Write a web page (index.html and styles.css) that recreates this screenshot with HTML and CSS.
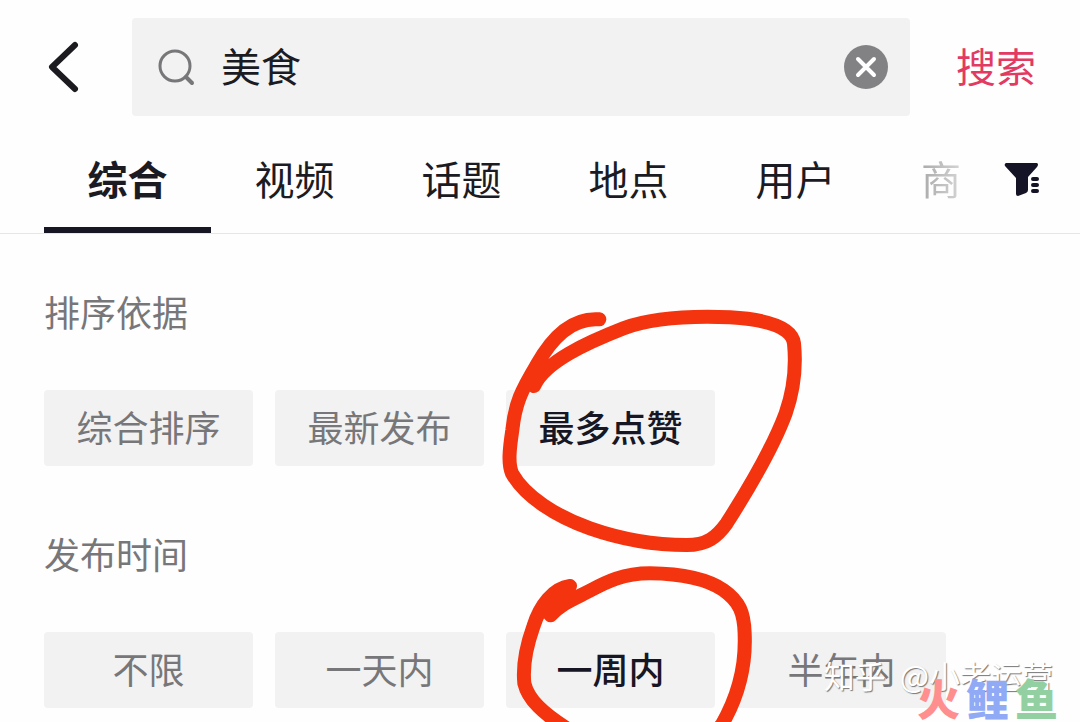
FILE: index.html
```html
<!DOCTYPE html>
<html lang="zh-CN">
<head>
  <meta charset="UTF-8" />
  <meta name="viewport" content="width=device-width, initial-scale=1.0"/>
  <title>美食 - 搜索</title>
  <link rel="stylesheet" href="styles.css">
</head>
<body>
  <div class="page">
    <form class="search-bar">
      <button type="button" class="back-btn" aria-label="返回">
        <svg width="36" height="54" viewBox="0 0 36 54">
          <path d="M31 5 L8 27 L31 49" fill="none" stroke="#1b1b20" stroke-width="6" stroke-linecap="round" stroke-linejoin="round"/>
        </svg>
      </button>
      <div class="search-box">
        <svg width="38" height="38" viewBox="0 0 38 38" aria-hidden="true">
          <circle cx="17" cy="18" r="15" fill="none" stroke="#77777a" stroke-width="3"/>
          <path d="M28 29 L34 35" stroke="#77777a" stroke-width="4" stroke-linecap="round"/>
        </svg>
        <input type="text" class="search-input" aria-label="搜索内容" value="美食">
        <button type="button" class="clear-btn" aria-label="清除">
          <svg width="44" height="44" viewBox="0 0 44 44">
            <circle cx="22" cy="22" r="22" fill="#828285"/>
            <path d="M14 14 L30 30 M30 14 L14 30" stroke="#fff" stroke-width="4" stroke-linecap="round"/>
          </svg>
        </button>
      </div>
      <button type="submit" class="submit-btn">搜索</button>
    </form>

    <div class="tab-bar">
      <nav class="tabs">
        <a href="#all" class="tab active">综合</a>
        <a href="#video" class="tab">视频</a>
        <a href="#topic" class="tab">话题</a>
        <a href="#place" class="tab">地点</a>
        <a href="#user" class="tab">用户</a>
        <a href="#goods" class="tab last">商</a>
      </nav>
      <button type="button" class="filter-btn" aria-label="筛选">
        <svg width="36" height="36" viewBox="0 0 36 36">
          <path d="M2 1 H33 Q35 2 33 5 L24 15 V28 Q24 30 22 31 L14 34 Q12 34 12 32 V16 L1 4 Q0 2 2 1 Z" fill="#151427"/>
          <path d="M29 17 H33 M29 23 H33 M29 29 H33" stroke="#151427" stroke-width="4" stroke-linecap="round"/>
        </svg>
      </button>
    </div>

    <main class="filters">
      <section class="filter-group">
        <h2>排序依据</h2>
        <div class="options">
          <button type="button" class="option">综合排序</button>
          <button type="button" class="option">最新发布</button>
          <div class="marked">
            <button type="button" class="option selected">最多点赞</button>
            <svg class="mark mark-likes" viewBox="0 0 990 780" aria-hidden="true">
              <path d="M328 58 C250 52 190 105 140 195 C95 270 75 310 67 390 C58 450 54 490 66 520 C105 590 200 650 300 685 C400 720 500 735 590 735 C650 735 680 712 710 670 C780 560 850 440 887 340 C915 260 917 180 912 130 C905 75 810 57 720 52 C600 47 490 52 400 85 C290 128 165 185 132 258 L140 195"/>
            </svg>
          </div>
        </div>
      </section>

      <section class="filter-group">
        <h2>发布时间</h2>
        <div class="options">
          <button type="button" class="option">不限</button>
          <button type="button" class="option">一天内</button>
          <div class="marked">
            <button type="button" class="option selected">一周内</button>
            <svg class="mark mark-week" viewBox="0 0 870 600" aria-hidden="true">
              <path d="M240 108 C190 115 150 165 130 230 C105 300 98 350 103 400 C115 450 160 490 230 535 C350 610 620 610 695 525 C750 430 768 340 764 250 C762 190 750 155 700 120 C640 80 560 71 480 70 C400 70 350 95 300 122 C250 148 215 160 182 196 L158 170 L225 122"/>
            </svg>
          </div>
          <button type="button" class="option">半年内</button>
        </div>
      </section>
    </main>

    <div class="credit">
      <span>知乎</span>
      <span>@小老运营</span>
    </div>
    <div class="stamp">
      <span class="red">火</span>
      <span class="blue">鲤</span>
      <span class="green">鱼</span>
    </div>
  </div>
</body>
</html>
```
FILE: styles.css
```css
* {
  box-sizing: border-box;
}

body {
  margin: 0;
  background-color: #fefefe;
  color: #1b1b24;
  font-family: "Noto Sans CJK SC", sans-serif;
}

button {
  padding: 0 0 4px;
  border: none;
  background: none;
  color: inherit;
  font-family: inherit;
  cursor: pointer;
}

svg {
  display: block;
}

.page {
  position: relative;
  min-height: 100vh;
  overflow: hidden;
}

/* search */
.search-bar {
  display: flex;
  align-items: center;
  padding: 18px 44px 0;
}

.back-btn {
  width: 88px;
  padding: 0;
}

.search-box {
  flex: 1;
  display: flex;
  align-items: center;
  min-width: 0;
  height: 98px;
  padding: 0 22px 0 26px;
  border-radius: 4px;
  background-color: #f2f2f2;
}

.search-input {
  flex: 1;
  min-width: 0;
  margin-left: 25px;
  padding: 0 0 4px;
  border: none;
  outline: none;
  background: none;
  color: #1b1b24;
  font-family: inherit;
  font-size: 40px;
}

.clear-btn {
  padding: 0;
}

.submit-btn {
  margin-left: 46px;
  color: #e23a62;
  font-size: 40px;
}

/* tabs */
.tab-bar {
  display: flex;
  align-items: center;
  height: 118px;
  padding: 0 40px 0 44px;
  border-bottom: 1px solid #e6e6e8;
}

.tabs {
  flex: 1;
  display: grid;
  grid-auto-flow: column;
  grid-auto-columns: 167px;
  height: 117px;
  overflow: hidden;
}

.tab {
  padding-top: 32px;
  border-bottom: 6px solid transparent;
  color: inherit;
  font-size: 40px;
  line-height: 60px;
  text-align: center;
  text-decoration: none;
  white-space: nowrap;
}

.tab.active {
  border-bottom-color: #171625;
  font-weight: bold;
}

/* fades out under the filter button */
.tab.last {
  padding-left: 42px;
  color: #aaa;
  text-align: left;
  -webkit-mask-image: linear-gradient(to right, #000 42px, rgba(0, 0, 0, 0.5) 82px);
  mask-image: linear-gradient(to right, #000 42px, rgba(0, 0, 0, 0.5) 82px);
}

.filter-btn {
  margin-left: 42px;
  padding: 10px 0 0;
}

/* filters */
.filters {
  padding: 50px 44px 14px;
}

.filter-group + .filter-group {
  margin-top: 60px;
}

.filter-group h2 {
  margin: 0 0 52px;
  color: #77777a;
  font-size: 36px;
  font-weight: normal;
  line-height: 54px;
}

.options {
  display: flex;
  gap: 22px;
}

.option {
  width: 209px;
  height: 76px;
  border-radius: 4px;
  background-color: #f2f2f2;
  color: #77777a;
  font-size: 36px;
}

.option.selected {
  color: #171625;
  font-weight: 500;
}

/* hand drawn circles */
.marked {
  position: relative;
}

.mark {
  position: absolute;
  overflow: visible;
  pointer-events: none;
  fill: none;
  stroke: #f4330f;
  stroke-width: 42;
  stroke-linecap: round;
  stroke-linejoin: round;
  z-index: 1;
}

.mark-likes {
  top: -90px;
  left: -16px;
  width: 330px;
}

.mark-week {
  top: -82px;
  left: -16px;
  width: 290px;
}

/* watermarks */
.credit {
  position: absolute;
  right: 27px;
  bottom: 24px;
  display: flex;
  gap: 14px;
  color: #fff;
  font-size: 31px;
  line-height: 46px;
  text-shadow: 1px 1px 1px #777;
  z-index: 2;
}

.stamp {
  position: absolute;
  right: 22px;
  bottom: 2px;
  display: flex;
  gap: 6px;
  font-size: 43px;
  font-weight: 900;
  line-height: 46px;
  z-index: 3;
}

.stamp .red {
  color: #ff8f8f;
}

.stamp .blue {
  color: #90aaf5;
}

.stamp .green {
  color: #92d0a2;
}
```
